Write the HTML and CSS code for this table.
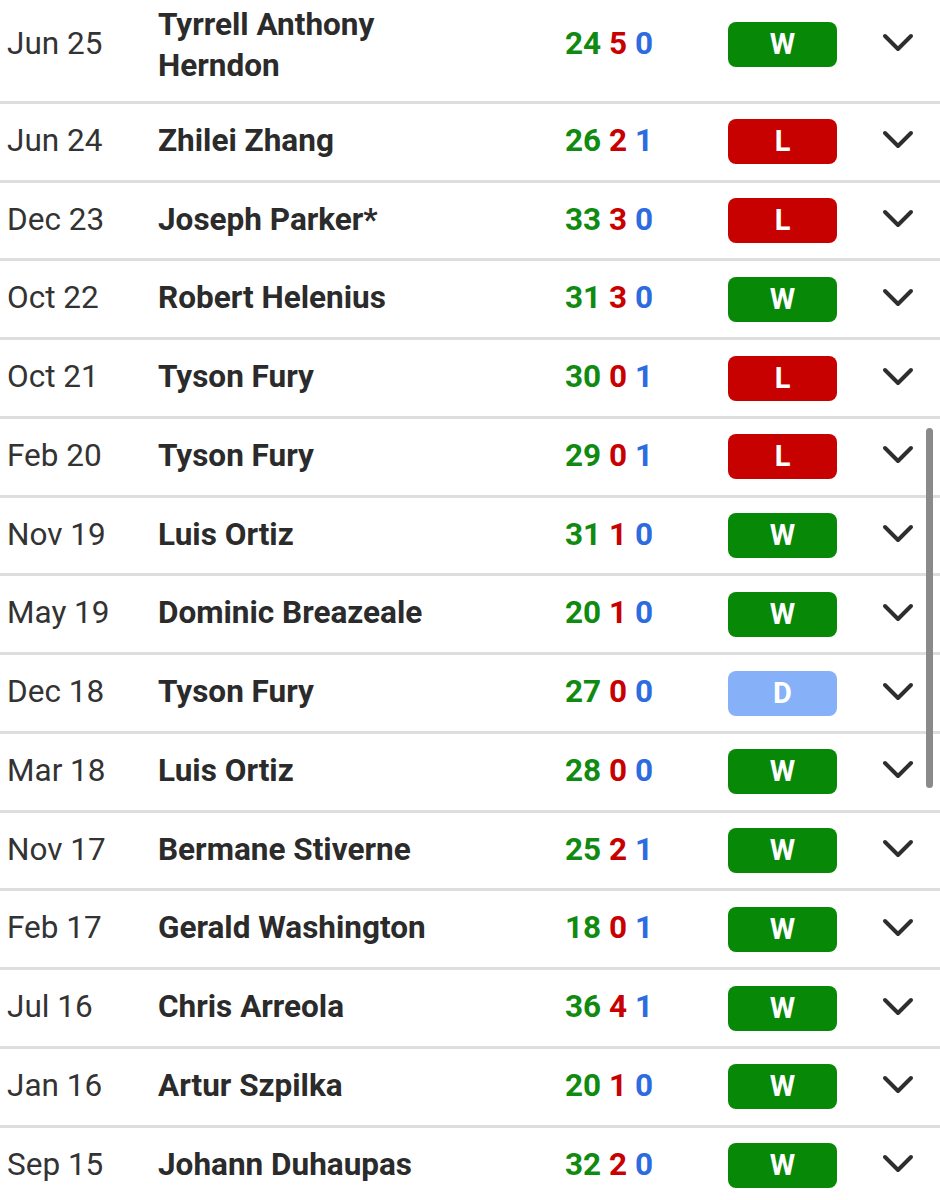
FILE: index.html
```html
<!DOCTYPE html>
<html lang="en">
<head>
<meta charset="utf-8">
<title>Fight record</title>
<link rel="stylesheet" href="styles.css">
</head>
<body>
<div class="list">
  <div class="row"><span class="date">Jun 25</span><span class="name multi">Tyrrell Anthony Herndon</span><span class="rec"><b class="w">24</b> <b class="l">5</b> <b class="d">0</b></span><span class="badge win">W</span><svg class="chev" viewBox="0 0 32 20"><path d="M3 3 L16 16 L29 3"/></svg></div>
  <div class="row"><span class="date">Jun 24</span><span class="name">Zhilei Zhang</span><span class="rec"><b class="w">26</b> <b class="l">2</b> <b class="d">1</b></span><span class="badge loss">L</span><svg class="chev" viewBox="0 0 32 20"><path d="M3 3 L16 16 L29 3"/></svg></div>
  <div class="row"><span class="date">Dec 23</span><span class="name">Joseph Parker*</span><span class="rec"><b class="w">33</b> <b class="l">3</b> <b class="d">0</b></span><span class="badge loss">L</span><svg class="chev" viewBox="0 0 32 20"><path d="M3 3 L16 16 L29 3"/></svg></div>
  <div class="row"><span class="date">Oct 22</span><span class="name">Robert Helenius</span><span class="rec"><b class="w">31</b> <b class="l">3</b> <b class="d">0</b></span><span class="badge win">W</span><svg class="chev" viewBox="0 0 32 20"><path d="M3 3 L16 16 L29 3"/></svg></div>
  <div class="row"><span class="date">Oct 21</span><span class="name">Tyson Fury</span><span class="rec"><b class="w">30</b> <b class="l">0</b> <b class="d">1</b></span><span class="badge loss">L</span><svg class="chev" viewBox="0 0 32 20"><path d="M3 3 L16 16 L29 3"/></svg></div>
  <div class="row"><span class="date">Feb 20</span><span class="name">Tyson Fury</span><span class="rec"><b class="w">29</b> <b class="l">0</b> <b class="d">1</b></span><span class="badge loss">L</span><svg class="chev" viewBox="0 0 32 20"><path d="M3 3 L16 16 L29 3"/></svg></div>
  <div class="row"><span class="date">Nov 19</span><span class="name">Luis Ortiz</span><span class="rec"><b class="w">31</b> <b class="l">1</b> <b class="d">0</b></span><span class="badge win">W</span><svg class="chev" viewBox="0 0 32 20"><path d="M3 3 L16 16 L29 3"/></svg></div>
  <div class="row"><span class="date">May 19</span><span class="name">Dominic Breazeale</span><span class="rec"><b class="w">20</b> <b class="l">1</b> <b class="d">0</b></span><span class="badge win">W</span><svg class="chev" viewBox="0 0 32 20"><path d="M3 3 L16 16 L29 3"/></svg></div>
  <div class="row"><span class="date">Dec 18</span><span class="name">Tyson Fury</span><span class="rec"><b class="w">27</b> <b class="l">0</b> <b class="d">0</b></span><span class="badge draw">D</span><svg class="chev" viewBox="0 0 32 20"><path d="M3 3 L16 16 L29 3"/></svg></div>
  <div class="row"><span class="date">Mar 18</span><span class="name">Luis Ortiz</span><span class="rec"><b class="w">28</b> <b class="l">0</b> <b class="d">0</b></span><span class="badge win">W</span><svg class="chev" viewBox="0 0 32 20"><path d="M3 3 L16 16 L29 3"/></svg></div>
  <div class="row"><span class="date">Nov 17</span><span class="name">Bermane Stiverne</span><span class="rec"><b class="w">25</b> <b class="l">2</b> <b class="d">1</b></span><span class="badge win">W</span><svg class="chev" viewBox="0 0 32 20"><path d="M3 3 L16 16 L29 3"/></svg></div>
  <div class="row"><span class="date">Feb 17</span><span class="name">Gerald Washington</span><span class="rec"><b class="w">18</b> <b class="l">0</b> <b class="d">1</b></span><span class="badge win">W</span><svg class="chev" viewBox="0 0 32 20"><path d="M3 3 L16 16 L29 3"/></svg></div>
  <div class="row"><span class="date">Jul 16</span><span class="name">Chris Arreola</span><span class="rec"><b class="w">36</b> <b class="l">4</b> <b class="d">1</b></span><span class="badge win">W</span><svg class="chev" viewBox="0 0 32 20"><path d="M3 3 L16 16 L29 3"/></svg></div>
  <div class="row"><span class="date">Jan 16</span><span class="name">Artur Szpilka</span><span class="rec"><b class="w">20</b> <b class="l">1</b> <b class="d">0</b></span><span class="badge win">W</span><svg class="chev" viewBox="0 0 32 20"><path d="M3 3 L16 16 L29 3"/></svg></div>
  <div class="row"><span class="date">Sep 15</span><span class="name">Johann Duhaupas</span><span class="rec"><b class="w">32</b> <b class="l">2</b> <b class="d">0</b></span><span class="badge win">W</span><svg class="chev" viewBox="0 0 32 20"><path d="M3 3 L16 16 L29 3"/></svg></div>
</div>
<div class="scrollbar"></div>
</body>
</html>
```

FILE: styles.css
```css
html, body {
  margin: 0;
  padding: 0;
  background: #fff;
  overflow: hidden;
}
body {
  font-family: Roboto, "Liberation Sans", Arial, sans-serif;
  color: #2e2e2e;
  width: 940px;
  height: 1200px;
  position: relative;
}
.list {
  margin-top: -11.8px;
}
.row {
  display: grid;
  grid-template-columns: 151px 406px 164px 109px 1fr;
  align-items: center;
  padding: 15.39px 0 15.39px 7px;
  border-bottom: 3px solid #dedede;
  line-height: 41px;
  font-size: 31.5px;
}
.date, .name, .rec, .chev {
  margin-bottom: 3px;
}
.name.multi {
  margin-bottom: 0;
}
.date {
  font-weight: 400;
  color: #333;
}
.name {
  font-weight: 700;
  color: #2b2b2b;
  max-width: 300px;
}
.rec {
  padding-left: 1px;
}
.rec b {
  font-weight: 700;
}
.rec .w { color: #108a10; }
.rec .l { color: #c80000; }
.rec .d { color: #2d6be0; }
.badge {
  height: 45px;
  border-radius: 8px;
  color: #fff;
  font-weight: 700;
  font-size: 29px;
  line-height: 45px;
  text-align: center;
}
.badge.win { background: #078807; }
.badge.loss { background: #c70000; }
.badge.draw { background: #86b0f7; }
.chev {
  width: 32px;
  height: 20px;
  margin-left: 45px;
  fill: none;
  stroke: #2e2e2e;
  stroke-width: 4;
  stroke-linecap: round;
  stroke-linejoin: round;
}
.scrollbar {
  position: absolute;
  left: 926px;
  top: 428px;
  width: 7px;
  height: 360px;
  border-radius: 4px;
  background: #8a8a8a;
}
```
